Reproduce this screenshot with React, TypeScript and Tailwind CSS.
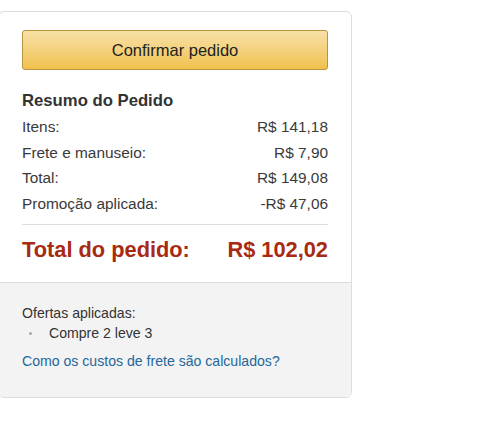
export default function App() {
  return (
    <div className="min-h-screen bg-white pt-[11px] font-['Liberation_Sans',Arial,sans-serif]">
      <div className="ml-[-2px] w-[354px] overflow-hidden rounded-[6px] border border-[#dddddd]">
        <div className="px-[23px] pt-[18px] pb-[7px]">
          <button className="flex h-[40px] w-full items-center justify-center rounded-[3px] border border-[#b8943f] bg-gradient-to-b from-[#f8e1a6] to-[#f0c14b] text-[16.5px] text-[#222]">
            Confirmar pedido
          </button>
          <h2 className="mt-[20px] text-[16.7px] leading-[22px] font-bold text-[#333]">Resumo do Pedido</h2>
          <div className="mt-[2px] text-[15.4px] text-[#3a3a3a]">
            <div className="flex h-[25.6px] items-center justify-between">
              <span>Itens:</span>
              <span>R$ 141,18</span>
            </div>
            <div className="flex h-[25.6px] items-center justify-between">
              <span>Frete e manuseio:</span>
              <span>R$ 7,90</span>
            </div>
            <div className="flex h-[25.6px] items-center justify-between">
              <span>Total:</span>
              <span>R$ 149,08</span>
            </div>
            <div className="flex h-[25.6px] items-center justify-between">
              <span>Promoção aplicada:</span>
              <span>-R$ 47,06</span>
            </div>
          </div>
          <div className="mt-[8px] border-t border-[#dddddd]" />
          <div className="flex h-[50px] items-center justify-between text-[21.8px] font-bold text-[#a82a12]">
            <span>Total do pedido:</span>
            <span>R$ 102,02</span>
          </div>
        </div>
        <div className="border-t border-[#dddddd] bg-[#f3f3f3] px-[23px] pt-[20px] pb-[26px] text-[14.1px] text-[#333]">
          <div className="leading-[20px]">Ofertas aplicadas:</div>
          <div className="flex items-center leading-[20px]">
            <span className="ml-[7px] mr-[17px] h-[3px] w-[3px] rounded-full bg-[#aaa]" />
            <span>Compre 2 leve 3</span>
          </div>
          <div className="mt-[8px] leading-[20px] text-[#23679a]">Como os custos de frete são calculados?</div>
        </div>
      </div>
    </div>
  );
}
